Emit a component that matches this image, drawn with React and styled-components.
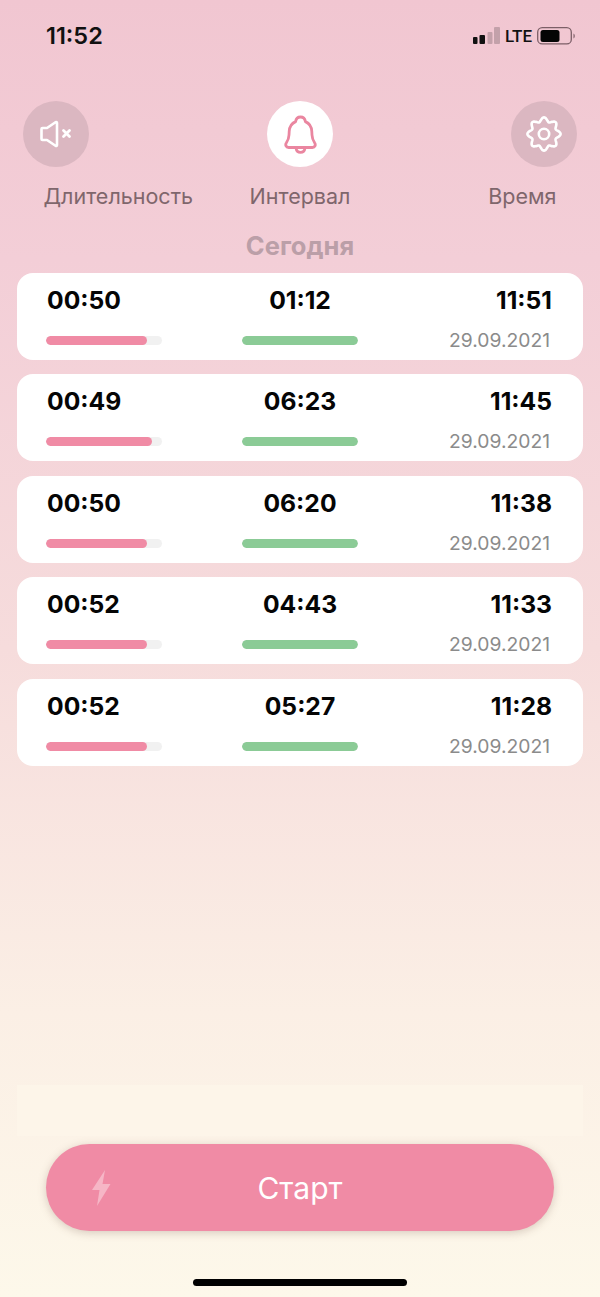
import React from 'react';
import styled, { createGlobalStyle } from 'styled-components';

const GlobalStyle = createGlobalStyle`
  html, body {
    margin: 0;
    padding: 0;
  }
  body {
    font-family: Inter, "Noto Sans", "Liberation Sans", sans-serif;
  }
`;

const Page = styled.div`
  width: 600px;
  height: 1297px;
  overflow: hidden;
  display: flex;
  flex-direction: column;
  background: linear-gradient(180deg, #f1c6d1 0%, #f3ced7 20%, #f6dcdc 50%, #fbefe5 78%, #fdf8ea 100%);
`;

const StatusBar = styled.div`
  height: 71px;
  padding: 0 24px 0 46px;
  display: flex;
  align-items: center;
  justify-content: space-between;
  flex-shrink: 0;
`;

const Clock = styled.span`
  font-size: 23.5px;
  font-weight: 600;
  color: #111;
`;

const StatusIcons = styled.div`
  display: flex;
  align-items: center;
  gap: 5px;
`;

const Lte = styled.span`
  font-family: Roboto, "Liberation Sans", sans-serif;
  font-size: 17px;
  font-weight: 500;
  line-height: 20px;
  color: #111;
`;

const ThreeCols = styled.div`
  display: grid;
  grid-template-columns: 1fr auto 1fr;
  align-items: center;
  margin-top: ${(p) => p.$top}px;
  padding: 0 ${(p) => p.$side}px;
  & > :first-child {
    justify-self: start;
  }
  & > :last-child {
    justify-self: end;
  }
`;

const RoundButton = styled.div`
  width: 66px;
  height: 66px;
  border-radius: 50%;
  display: flex;
  align-items: center;
  justify-content: center;
  background: ${(p) => (p.$active ? '#ffffff' : '#dbb7c1')};
`;

const TabLabel = styled.span`
  font-size: 21.5px;
  line-height: 28px;
  color: #7f666c;
  white-space: nowrap;
`;

const DayTitle = styled.div`
  margin-top: 21px;
  text-align: center;
  font-size: 25.5px;
  line-height: 30px;
  font-weight: 700;
  color: #bb9fa8;
`;

const List = styled.div`
  margin: 12px 17px 0;
  display: flex;
  flex-direction: column;
  gap: 14.4px;
`;

const Card = styled.div`
  height: 87px;
  box-sizing: border-box;
  padding: 12px 29px 0;
  border-radius: 16px;
  background: #ffffff;
  display: flex;
  justify-content: space-between;
`;

const Column = styled.div`
  width: 116px;
  display: flex;
  flex-direction: column;
  align-items: ${(p) => p.$align || 'flex-start'};
`;

const Value = styled.span`
  font-size: 24.7px;
  line-height: 30px;
  font-weight: 700;
  color: #050505;
  white-space: nowrap;
  margin: 0 ${(p) => p.$right || 0}px 0 ${(p) => p.$left || 0}px;
`;

const Track = styled.div`
  margin-top: 21px;
  width: 100%;
  height: 9px;
  border-radius: 5px;
  background: #f1f1f1;
  overflow: hidden;
`;

const Fill = styled.div`
  height: 100%;
  border-radius: 5px;
  background: ${(p) => p.$color};
`;

const DateText = styled.span`
  margin-top: 12px;
  padding-right: 4px;
  font-size: 19.3px;
  line-height: 26px;
  color: #8b8b8b;
  white-space: nowrap;
`;

const Footer = styled.div`
  margin-top: auto;
  display: flex;
  flex-direction: column;
  flex-shrink: 0;
`;

const FadePanel = styled.div`
  height: 51px;
  margin: 0 17px;
  background: #fdf5e9;
`;

const StartButton = styled.div`
  position: relative;
  margin: 8px 46px 0;
  height: 87px;
  border-radius: 44px;
  background: #f08ba5;
  box-shadow: 0 2px 8px rgba(120, 90, 80, 0.28);
  display: flex;
  align-items: center;
  justify-content: center;
  color: #fff;
  font-size: 30px;
`;

const BoltWrap = styled.div`
  position: absolute;
  left: 46px;
  top: 26px;
  display: flex;
`;

const HomeBar = styled.div`
  margin: 48px auto 11px;
  width: 214px;
  height: 7px;
  border-radius: 4px;
  background: #000;
`;

const rows = [
  { a: '00:50', b: '01:12', c: '11:51', pct: 87 },
  { a: '00:49', b: '06:23', c: '11:45', pct: 91 },
  { a: '00:50', b: '06:20', c: '11:38', pct: 87 },
  { a: '00:52', b: '04:43', c: '11:33', pct: 87 },
  { a: '00:52', b: '05:27', c: '11:28', pct: 87 },
];

function SignalIcon() {
  return (
    <svg width="27" height="17" viewBox="0 0 27 17">
      <rect x="0" y="10" width="4.5" height="7" rx="1" fill="#111" />
      <rect x="6.5" y="8" width="5.5" height="9" rx="1" fill="#111" />
      <rect x="14.5" y="5" width="5" height="12" rx="1" fill="#c3a1aa" />
      <rect x="21" y="0" width="6" height="17" rx="1" fill="#c3a1aa" />
    </svg>
  );
}

function BatteryIcon() {
  return (
    <svg width="39" height="18" viewBox="0 0 39 18">
      <rect x="0.7" y="0.7" width="33.6" height="16.2" rx="4.5" fill="none" stroke="#7c5f67" strokeWidth="1.3" />
      <rect x="3.5" y="3" width="19" height="12" rx="2.5" fill="#050505" />
      <path d="M36.5 6.5 C38.2 7.2 38.2 10.8 36.5 11.5 Z" fill="#7c5f67" />
    </svg>
  );
}

function MuteIcon() {
  return (
    <svg width="32" height="28" viewBox="0 0 32 28" fill="none" stroke="#fff" strokeLinejoin="round" strokeLinecap="round">
      <path d="M1.5 9 Q1.5 8 2.5 8 H7 L15.5 2.2 Q17 1.5 17 3 V25 Q17 26.5 15.5 25.8 L7 20 H2.5 Q1.5 20 1.5 19 Z" strokeWidth="2.6" />
      <path d="M23.5 10.5 L29.5 16.5 M29.5 10.5 L23.5 16.5" strokeWidth="2.8" />
    </svg>
  );
}

function BellIcon() {
  return (
    <svg width="33" height="39" viewBox="0 0 33 39" fill="none" stroke="#ea86a0" strokeWidth="2.8" strokeLinejoin="round" strokeLinecap="round">
      <path d="M16.5 2 C13.8 2 12 3.8 11.6 6.6 C7.4 8.4 5.4 12.4 5.2 16.5 L5 20 C4.8 24 3.6 26 2.4 27.8 C1 29.8 2 32.5 4.6 32.5 H28.4 C31 32.5 32 29.8 30.6 27.8 C29.4 26 28.2 24 28 20 L27.8 16.5 C27.6 12.4 25.6 8.4 21.4 6.6 C21 3.8 19.2 2 16.5 2 Z" />
      <path d="M12 33 C12.4 35.8 14.2 37.4 16.5 37.4 C18.8 37.4 20.6 35.8 21 33" />
    </svg>
  );
}

// eight soft lobes round the centre, like the reference gear
function gearPath(cx, cy, radius, depth) {
  const points = [];
  for (let i = 0; i < 160; i += 1) {
    const t = (i / 160) * Math.PI * 2;
    const r = radius + depth * Math.cos(8 * t);
    points.push(`${(cx + r * Math.sin(t)).toFixed(2)} ${(cy - r * Math.cos(t)).toFixed(2)}`);
  }
  return `M${points.join(' L')} Z`;
}

function GearIcon() {
  return (
    <svg width="38" height="38" viewBox="0 0 38 38" fill="none" stroke="#fff" strokeWidth="2.6">
      <path d={gearPath(19, 19, 14.6, 2)} strokeLinejoin="round" />
      <circle cx="19" cy="19" r="5.2" />
    </svg>
  );
}

function BoltIcon() {
  return (
    <svg width="20" height="36" viewBox="0 0 20 36">
      <path d="M13 0 L0 20 H7.5 L5 36 L18.5 14 H10.5 Z" fill="#f6b6c6" />
    </svg>
  );
}

export default function App() {
  return (
    <Page>
      <GlobalStyle />
      <StatusBar>
        <Clock>11:52</Clock>
        <StatusIcons>
          <SignalIcon />
          <Lte>LTE</Lte>
          <BatteryIcon />
        </StatusIcons>
      </StatusBar>

      <ThreeCols $top={30} $side={23}>
        <RoundButton>
          <MuteIcon />
        </RoundButton>
        <RoundButton $active>
          <BellIcon />
        </RoundButton>
        <RoundButton>
          <GearIcon />
        </RoundButton>
      </ThreeCols>

      <ThreeCols $top={15} $side={43.5}>
        <TabLabel>Длительность</TabLabel>
        <TabLabel>Интервал</TabLabel>
        <TabLabel>Время</TabLabel>
      </ThreeCols>

      <DayTitle>Сегодня</DayTitle>

      <List>
        {rows.map((r) => (
          <Card key={r.c}>
            <Column>
              <Value $left={1}>{r.a}</Value>
              <Track>
                <Fill $color="#f08ba5" style={{ width: `${r.pct}%` }} />
              </Track>
            </Column>
            <Column $align="center">
              <Value>{r.b}</Value>
              <Track>
                <Fill $color="#8bcb96" style={{ width: '100%' }} />
              </Track>
            </Column>
            <Column $align="flex-end">
              <Value $right={2}>{r.c}</Value>
              <DateText>29.09.2021</DateText>
            </Column>
          </Card>
        ))}
      </List>

      <Footer>
        <FadePanel />
        <StartButton>
          <BoltWrap>
            <BoltIcon />
          </BoltWrap>
          Старт
        </StartButton>
        <HomeBar />
      </Footer>
    </Page>
  );
}
